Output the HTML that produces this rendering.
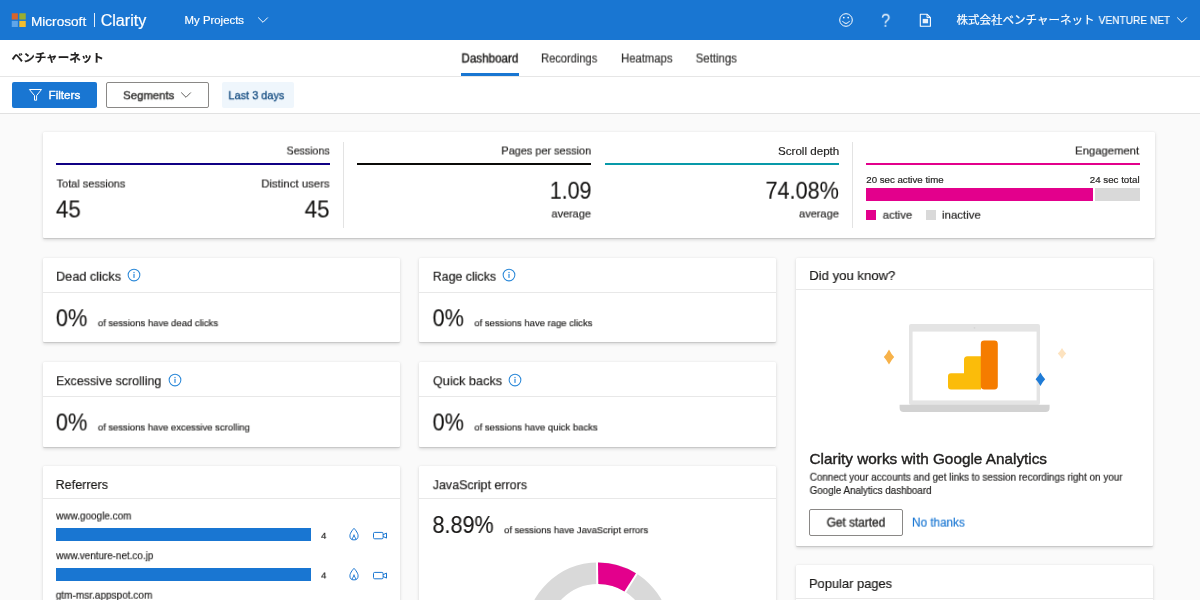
<!DOCTYPE html>
<html lang="ja">
<head>
<meta charset="utf-8">
<title>Microsoft Clarity</title>
<style>
*{box-sizing:border-box;margin:0;padding:0}
html,body{width:1200px;height:600px;overflow:hidden;background:#fafafa;font-family:"Liberation Sans","Noto Sans CJK JP",sans-serif;color:#201f1e}
.abs{position:absolute}
.t{position:absolute;white-space:nowrap;line-height:1;-webkit-text-stroke:.18px currentColor}
#hdr{position:absolute;left:0;top:0;width:1200px;height:40px;background:#1976d2;color:#fff}
#sub{position:absolute;left:0;top:40px;width:1200px;height:37px;background:#fff;border-bottom:1px solid #e6e6e6}
#flt{position:absolute;left:0;top:77px;width:1200px;height:37px;background:#fff;border-bottom:1px solid #e1e1e1}
.card{position:absolute;background:#fff;box-shadow:0 1.6px 3.6px 0 rgba(0,0,0,.132),0 .3px .9px 0 rgba(0,0,0,.108);border-radius:1px}
.chd{position:absolute;left:0;right:0;top:0;border-bottom:1px solid #e8e8e8}
.ttl{color:#1b1a19}
.big{color:#151413;-webkit-text-stroke:.1px currentColor}
.sm{color:#252423}
.lbl{color:#201f1e}
.r{text-align:right}
</style>
<style>
.t{transform-origin:0 50%;will-change:transform}
#ms{left:30.00px;top:14.00px;font-size:13.6px;transform:translate(0.93px,0.50px) scaleX(1.0017)}
#cl{left:100.00px;top:13.00px;font-size:16px;transform:translate(0.66px,0.00px) scaleX(1.0057)}
#mp{left:184.00px;top:15.00px;font-size:11.2px;transform:translate(0.58px,0.25px) scaleX(1.0169)}
#qm{left:880.00px;top:11.00px;font-size:18px;transform:translate(1.00px,0.70px) scaleX(0.9203)}
#org{left:956.00px;top:15.00px;font-size:11.5px;transform:translate(0.42px,0.07px) scaleX(1.0020)}
#org2{left:1098.00px;top:15.00px;font-size:11.5px;transform:translate(0.62px,0.00px) scaleX(0.8817)}
#pj{left:11.00px;top:13.00px;font-size:11.5px;transform:translate(0.59px,0.19px) scaleX(1.0043)}
#tb1{left:461.00px;top:12.00px;font-size:12px;transform:translate(0.41px,0.50px) scaleX(0.9708)}
#tb2{left:541.00px;top:12.00px;font-size:12px;transform:translate(0.09px,0.50px) scaleX(0.9244)}
#tb3{left:621.00px;top:12.00px;font-size:12px;transform:translate(0.08px,0.50px) scaleX(0.9392)}
#tb4{left:695.00px;top:12.00px;font-size:12px;transform:translate(0.67px,0.50px) scaleX(0.9516)}
#fl{left:48.00px;top:12.00px;font-size:11.6px;transform:translate(0.51px,0.25px) scaleX(1.0062)}
#sg{left:123.00px;top:12.00px;font-size:11.6px;transform:translate(0.15px,0.25px) scaleX(0.9787)}
#l3{left:228.00px;top:12.00px;font-size:11.6px;transform:translate(0.38px,0.25px) scaleX(0.9438)}
#s1{left:243.00px;top:13.00px;font-size:11.5px;transform:translate(0.56px,0.50px) scaleX(0.9231)}
#s2{left:13.00px;top:46.00px;font-size:11.5px;transform:translate(0.60px,0.50px) scaleX(0.9513)}
#s3{left:218.00px;top:46.00px;font-size:11.5px;transform:translate(0.36px,0.50px) scaleX(0.9877)}
#s4{left:12.00px;top:66.00px;font-size:23px;transform:translate(0.92px,0.50px) scaleX(0.9731)}
#s5{left:261.00px;top:66.00px;font-size:23px;transform:translate(0.67px,0.50px) scaleX(0.9731)}
#p1{left:458.00px;top:13.00px;font-size:11.5px;transform:translate(0.37px,0.50px) scaleX(0.9489)}
#p2{left:506.00px;top:47.00px;font-size:23px;transform:translate(0.81px,0.75px) scaleX(0.9275)}
#p3{left:508.00px;top:76.00px;font-size:11.5px;transform:translate(0.49px,0.50px) scaleX(0.9475)}
#d1{left:735.00px;top:13.00px;font-size:11.5px;transform:translate(0.01px,0.50px) scaleX(1.0089)}
#d2{left:722.00px;top:47.00px;font-size:23px;transform:translate(0.45px,0.75px) scaleX(0.9415)}
#d3{left:755.00px;top:76.00px;font-size:11.5px;transform:translate(0.99px,0.50px) scaleX(0.9596)}
#e1{left:1032.00px;top:13.00px;font-size:11.5px;transform:translate(0.10px,0.50px) scaleX(0.9820)}
#e2{left:823.00px;top:42.00px;font-size:9.6px;transform:translate(0.26px,0.50px) scaleX(1.0081)}
#e3{left:1046.00px;top:42.00px;font-size:9.6px;transform:translate(0.75px,0.50px) scaleX(1.0157)}
#e4{left:839.00px;top:77.00px;font-size:11.5px;transform:translate(0.70px,0.75px) scaleX(0.9799)}
#e5{left:899.00px;top:77.00px;font-size:11.5px;transform:translate(0.03px,0.75px) scaleX(0.9950)}
#dc1{left:12.00px;top:11.20px;font-size:13.6px;transform:translate(0.99px,0.75px) scaleX(0.9355)}
#dc2{left:12.00px;top:49.20px;font-size:23px;transform:translate(0.83px,0.25px) scaleX(0.9498)}
#dc3{left:54.00px;top:60.20px;font-size:9.7px;transform:translate(0.79px,0.25px) scaleX(0.9796)}
#rc1{left:12.61px;top:11.20px;font-size:13.6px;transform:translate(0.76px,0.75px) scaleX(0.9099)}
#rc2{left:12.61px;top:49.20px;font-size:23px;transform:translate(0.59px,0.25px) scaleX(0.9419)}
#rc3{left:54.61px;top:60.20px;font-size:9.7px;transform:translate(0.30px,0.25px) scaleX(0.9791)}
#es1{left:13.00px;top:11.81px;font-size:13.6px;transform:translate(0.00px,0.25px) scaleX(0.9172)}
#es2{left:12.00px;top:48.81px;font-size:23px;transform:translate(0.83px,0.50px) scaleX(0.9498)}
#es3{left:54.00px;top:59.81px;font-size:9.7px;transform:translate(0.82px,0.50px) scaleX(0.9769)}
#qb1{left:12.61px;top:11.81px;font-size:13.6px;transform:translate(0.86px,0.25px) scaleX(0.9348)}
#qb2{left:12.61px;top:48.81px;font-size:23px;transform:translate(0.59px,0.50px) scaleX(0.9419)}
#qb3{left:54.61px;top:59.81px;font-size:9.7px;transform:translate(0.29px,0.50px) scaleX(0.9838)}
#dk1{left:13.20px;top:11.31px;font-size:13.6px;transform:translate(0.21px,0.00px) scaleX(0.9666)}
#dk2{left:13.20px;top:194.31px;font-size:14.6px;transform:translate(0.55px,0.30px) scaleX(1.0495)}
#dk3{left:13.20px;top:214.31px;font-size:10px;transform:translate(0.72px,0.70px) scaleX(0.9870)}
#dk4{left:13.20px;top:228.31px;font-size:10px;transform:translate(0.68px,0.00px) scaleX(0.9785)}
#dk5{left:30.20px;top:258.31px;font-size:12px;transform:translate(0.68px,0.60px) scaleX(0.9853)}
#dk6{left:116.20px;top:258.31px;font-size:12px;transform:translate(0.00px,0.60px) scaleX(0.9771)}
#rf1{left:12.00px;top:11.61px;font-size:13.6px;transform:translate(0.54px,0.00px) scaleX(0.9276)}
#rf2{left:13.00px;top:43.61px;font-size:10.5px;transform:translate(0.11px,0.50px) scaleX(0.9502)}
#rf3{left:277.00px;top:63.61px;font-size:9.7px;transform:translate(0.96px,0.80px) scaleX(0.9916)}
#rf4{left:13.00px;top:83.61px;font-size:10.5px;transform:translate(0.20px,0.20px) scaleX(0.9401)}
#rf5{left:277.00px;top:103.61px;font-size:9.7px;transform:translate(0.96px,0.50px) scaleX(0.9916)}
#rf6{left:12.00px;top:122.61px;font-size:10.5px;transform:translate(0.76px,0.70px) scaleX(0.9571)}
#js1{left:12.61px;top:11.61px;font-size:13.6px;transform:translate(0.75px,0.25px) scaleX(0.9174)}
#js2{left:12.61px;top:47.61px;font-size:23px;transform:translate(0.50px,0.00px) scaleX(0.9372)}
#js3{left:84.61px;top:58.61px;font-size:9.7px;transform:translate(0.05px,0.25px) scaleX(0.9732)}
#pp1{left:12.20px;top:11.70px;font-size:13.6px;transform:translate(0.92px,0.00px) scaleX(0.9489)}
</style>
</head>
<body>
<!-- header -->
<div id="hdr">
  <svg class="abs" style="left:10px;top:11px" width="18" height="18" viewBox="10 11 18 18"><rect x="11.75" y="13.25" width="6.1" height="6.3" fill="#d8642a"/><rect x="19.3" y="13.25" width="6.45" height="6.3" fill="#9aad30"/><rect x="11.75" y="20.9" width="6.1" height="6.1" fill="#5ea5ea"/><rect x="19.3" y="20.9" width="6.45" height="6.1" fill="#f2bd2e"/></svg>
  <div class="t" id="ms">Microsoft</div>
  <div class="abs" style="left:94px;top:12.5px;width:1px;height:14px;background:#e3eefa"></div>
  <div class="t" id="cl">Clarity</div>
  <div class="t" id="mp">My Projects</div>
  <svg class="abs" style="left:257px;top:15px" width="12" height="10" viewBox="0 0 12 10"><path d="M1.2 2.5 L6 7.3 L10.8 2.5" fill="none" stroke="#fff" stroke-width="1"/></svg>
  <!-- right icons -->
  <svg class="abs" style="left:838px;top:12px" width="16" height="16" viewBox="0 0 16 16"><circle cx="8" cy="8" r="6.3" fill="none" stroke="#fff" stroke-width="1"/><circle cx="5.8" cy="5.6" r=".85" fill="#fff"/><circle cx="10.2" cy="5.6" r=".85" fill="#fff"/><path d="M4.3 8.9 Q8 14 11.7 8.9" fill="none" stroke="#fff" stroke-width="1"/></svg>
  <div class="t" id="qm" style="-webkit-text-stroke:0;color:rgba(255,255,255,.92)">?</div>
  <svg class="abs" style="left:918px;top:12px" width="14" height="16" viewBox="0 0 14 16"><path d="M2.3 2.2 H9 L12.4 5.6 V14.2 H2.3 Z" fill="none" stroke="#fff" stroke-width="1.1" stroke-linejoin="round"/><path d="M9 2.2 V5.6 H12.4" fill="none" stroke="#fff" stroke-width="1"/><rect x="4.7" y="6.9" width="5.4" height="4.4" fill="#fff" opacity=".9"/></svg>
  <div class="t" id="org">株式会社ベンチャーネット</div> <div class="t" id="org2">VENTURE NET</div>
  <svg class="abs" style="left:1176px;top:15px" width="12" height="10" viewBox="0 0 12 10"><path d="M1.2 2.5 L6 7.3 L10.8 2.5" fill="none" stroke="#fff" stroke-width="1"/></svg>
</div>
<!-- sub nav -->
<div id="sub">
  <div class="t" id="pj" style="font-weight:bold;color:#201f1e">ベンチャーネット</div>
  <div class="t" id="tb1" style="-webkit-text-stroke:.4px #201f1e;color:#201f1e">Dashboard</div>
  <div class="abs" style="left:461px;top:32.6px;width:58px;height:3.2px;background:#1976d2"></div>
  <div class="t" id="tb2" style="color:#323130">Recordings</div>
  <div class="t" id="tb3" style="color:#323130">Heatmaps</div>
  <div class="t" id="tb4" style="color:#323130">Settings</div>
</div>
<!-- filter bar -->
<div id="flt">
  <div class="abs" style="left:12px;top:5px;width:85px;height:26px;background:#1976d2;border-radius:2px"></div>
  <svg class="abs" style="left:28px;top:11px" width="15" height="14" viewBox="0 0 15 14"><path d="M1.4 1.5 H13.5 L8.6 7.6 V12.2 H6.5 V7.6 Z" fill="none" stroke="#fff" stroke-width="1" stroke-linejoin="round"/></svg>
  <div class="t" id="fl" style="-webkit-text-stroke:.4px #fff;color:#fff">Filters</div>
  <div class="abs" style="left:106px;top:5px;width:103px;height:26px;background:#fff;border:1px solid #8a8886;border-radius:2px"></div>
  <div class="t" id="sg" style="-webkit-text-stroke:.4px #323130;color:#323130">Segments</div>
  <svg class="abs" style="left:180px;top:13px" width="12" height="10" viewBox="0 0 12 10"><path d="M1.2 2.5 L6 7.3 L10.8 2.5" fill="none" stroke="#605e5c" stroke-width="1"/></svg>
  <div class="abs" style="left:222px;top:5px;width:72px;height:26px;background:#eff6fc;border-radius:2px"></div>
  <div class="t" id="l3" style="color:#10497f;-webkit-text-stroke:.3px #10497f">Last 3 days</div>
</div>

<!-- summary card -->
<div class="card" style="left:43px;top:132px;width:1111.6px;height:105.7px">
  <div class="t lbl r" id="s1">Sessions</div>
  <div class="abs" style="left:13.25px;top:31.25px;width:273.25px;height:2px;background:#100084"></div>
  <div class="t lbl" id="s2">Total sessions</div>
  <div class="t lbl r" id="s3">Distinct users</div>
  <div class="t big" id="s4">45</div>
  <div class="t big r" id="s5">45</div>
  <div class="abs" style="left:299.5px;top:10px;width:1px;height:85.5px;background:#e3e3e3"></div>

  <div class="t lbl r" id="p1">Pages per session</div>
  <div class="abs" style="left:314px;top:31.25px;width:233.75px;height:2px;background:#0b0a08"></div>
  <div class="t big r" id="p2">1.09</div>
  <div class="t lbl r" id="p3">average</div>

  <div class="t lbl r" id="d1">Scroll depth</div>
  <div class="abs" style="left:561.5px;top:31.25px;width:234.5px;height:2px;background:#0899a9"></div>
  <div class="t big r" id="d2">74.08%</div>
  <div class="t lbl r" id="d3">average</div>
  <div class="abs" style="left:809px;top:10px;width:1px;height:85.5px;background:#e3e3e3"></div>

  <div class="t lbl r" id="e1">Engagement</div>
  <div class="abs" style="left:823.25px;top:31.25px;width:273.25px;height:2px;background:#e3008c"></div>
  <div class="t sm" id="e2">20 sec active time</div>
  <div class="t sm r" id="e3">24 sec total</div>
  <div class="abs" style="left:823.25px;top:56.25px;width:227px;height:12.75px;background:#e3008c"></div>
  <div class="abs" style="left:1052.25px;top:56.25px;width:44.25px;height:12.75px;background:#d9d9d9"></div>
  <div class="abs" style="left:823.25px;top:78px;width:10px;height:9.6px;background:#e3008c"></div>
  <div class="t lbl" id="e4">active</div>
  <div class="abs" style="left:882.75px;top:78px;width:9.75px;height:9.6px;background:#d9d9d9"></div>
  <div class="t lbl" id="e5">inactive</div>
</div>

<!-- Dead clicks -->
<div class="card" style="left:43px;top:257.8px;width:357.2px;height:84.6px">
  <div class="chd" style="height:34.9px"></div>
  <div class="t ttl" id="dc1">Dead clicks</div>
  <svg class="abs info" style="left:84.1px;top:10.6px" width="14" height="14" viewBox="0 0 14 14"><circle cx="7" cy="7" r="5.85" fill="none" stroke="#2b88d8" stroke-width="1.05"/><rect x="6.3" y="6" width="1.4" height="3.9" fill="#4a9be2"/><rect x="6.3" y="3.9" width="1.4" height="1.3" fill="#4a9be2"/></svg>
  <div class="t big" id="dc2">0%</div>
  <div class="t sm" id="dc3">of sessions have dead clicks</div>
</div>
<!-- Rage clicks -->
<div class="card" style="left:419.4px;top:257.8px;width:357px;height:84.6px">
  <div class="chd" style="height:34.9px"></div>
  <div class="t ttl" id="rc1">Rage clicks</div>
  <svg class="abs info" style="left:83.1px;top:10.6px" width="14" height="14" viewBox="0 0 14 14"><circle cx="7" cy="7" r="5.85" fill="none" stroke="#2b88d8" stroke-width="1.05"/><rect x="6.3" y="6" width="1.4" height="3.9" fill="#4a9be2"/><rect x="6.3" y="3.9" width="1.4" height="1.3" fill="#4a9be2"/></svg>
  <div class="t big" id="rc2">0%</div>
  <div class="t sm" id="rc3">of sessions have rage clicks</div>
</div>
<!-- Excessive scrolling -->
<div class="card" style="left:43px;top:362.2px;width:357.2px;height:84.6px">
  <div class="chd" style="height:34.6px"></div>
  <div class="t ttl" id="es1">Excessive scrolling</div>
  <svg class="abs info" style="left:124.5px;top:10.7px" width="14" height="14" viewBox="0 0 14 14"><circle cx="7" cy="7" r="5.85" fill="none" stroke="#2b88d8" stroke-width="1.05"/><rect x="6.3" y="6" width="1.4" height="3.9" fill="#4a9be2"/><rect x="6.3" y="3.9" width="1.4" height="1.3" fill="#4a9be2"/></svg>
  <div class="t big" id="es2">0%</div>
  <div class="t sm" id="es3">of sessions have excessive scrolling</div>
</div>
<!-- Quick backs -->
<div class="card" style="left:419.4px;top:362.2px;width:357px;height:84.6px">
  <div class="chd" style="height:34.6px"></div>
  <div class="t ttl" id="qb1">Quick backs</div>
  <svg class="abs info" style="left:88.9px;top:10.7px" width="14" height="14" viewBox="0 0 14 14"><circle cx="7" cy="7" r="5.85" fill="none" stroke="#2b88d8" stroke-width="1.05"/><rect x="6.3" y="6" width="1.4" height="3.9" fill="#4a9be2"/><rect x="6.3" y="3.9" width="1.4" height="1.3" fill="#4a9be2"/></svg>
  <div class="t big" id="qb2">0%</div>
  <div class="t sm" id="qb3">of sessions have quick backs</div>
</div>

<!-- Did you know -->
<div class="card" style="left:795.8px;top:257.7px;width:357.4px;height:288px">
  <div class="chd" style="height:32.8px"></div>
  <div class="t ttl" id="dk1">Did you know?</div>
  <svg class="abs" style="left:74px;top:52px" width="210" height="110" viewBox="870 310 210 110">
    <rect x="909" y="324" width="131" height="81" rx="2" fill="#e4e4e4"/>
    <rect x="912.6" y="331.6" width="124" height="68.8" fill="#fff"/>
    <path d="M899.6 404.7 H1049.6 V408 Q1049.6 412 1045.6 412 H903.6 Q899.6 412 899.6 408 Z" fill="#d2d2d2"/>
    <path d="M964 359.8 Q964 356.3 967.5 356.3 H981 V389.5 H951 Q948 389.5 948 386.5 V376.2 Q948 373.2 951 373.2 H964 Z" fill="#fbbc0a"/>
    <rect x="980.8" y="340.5" width="17" height="49" rx="3.4" fill="#f57c00"/>
    <path d="M889 349.4 Q891.18 353.81 894.2 357 Q891.18 360.19 889 364.6 Q886.82 360.19 883.8 357 Q886.82 353.81 889 349.4Z" fill="#f7b24a"/>
    <path d="M1062 347.9 Q1063.76 351.15 1066.2 353.5 Q1063.76 355.85 1062 359.1 Q1060.24 355.85 1057.8 353.5 Q1060.24 351.15 1062 347.9Z" fill="#fde3c0"/>
    <path d="M1040.4 372.6 Q1042.42 376.49 1045.2 379.3 Q1042.42 382.11 1040.4 386.0 Q1038.38 382.11 1035.6000000000001 379.3 Q1038.38 376.49 1040.4 372.6Z" fill="#1f7bd6"/>
    <circle cx="974.5" cy="327.8" r=".9" fill="#d6d6d6"/>
  </svg>
  <div class="t" id="dk2" style="-webkit-text-stroke:.4px #201f1e;color:#201f1e">Clarity works with Google Analytics</div>
  <div class="t sm" id="dk3">Connect your accounts and get links to session recordings right on your</div>
  <div class="t sm" id="dk4">Google Analytics dashboard</div>
  <div class="abs" style="left:13px;top:251px;width:94px;height:27px;border:1px solid #8a8886;border-radius:2px;background:#fff"></div>
  <div class="t" id="dk5" style="-webkit-text-stroke:.4px #323130;color:#323130">Get started</div>
  <div class="t" id="dk6" style="color:#1976d2">No thanks</div>
</div>

<!-- Referrers -->
<div class="card" style="left:43px;top:466.4px;width:357.2px;height:160px">
  <div class="chd" style="height:32.7px"></div>
  <div class="t ttl" id="rf1">Referrers</div>
  <div class="t" id="rf2" style="color:#201f1e">www.google.com</div>
  <div class="abs" style="left:13px;top:62.1px;width:255.2px;height:13px;background:#1976d2"></div>
  <div class="t sm" id="rf3">4</div>
  <svg class="abs" style="left:304.5px;top:61.1px" width="12" height="15" viewBox="0 0 12 15"><path d="M6 1.3 C6 1.3 10.1 5.6 10.1 8.8 A4.1 4.1 0 0 1 1.9 8.8 C1.9 5.6 6 1.3 6 1.3Z" fill="none" stroke="#1976d2" stroke-width="1" stroke-linejoin="round"/><path d="M4.3 12.5 C4.3 10.4 6 9.6 6 7.7 C6 9.6 7.7 10.4 7.7 12.5" fill="none" stroke="#1976d2" stroke-width=".9" stroke-linejoin="round"/></svg>
  <svg class="abs" style="left:329px;top:63.4px" width="16" height="11" viewBox="0 0 16 11"><rect x="1.5" y="2.4" width="9.6" height="6.4" rx="1.2" fill="none" stroke="#1976d2" stroke-width="1"/><path d="M11.1 4.7 L14.5 3.1 V8.1 L11.1 6.5" fill="none" stroke="#1976d2" stroke-width="1" stroke-linejoin="round"/></svg>
  <div class="t" id="rf4" style="color:#201f1e">www.venture-net.co.jp</div>
  <div class="abs" style="left:13px;top:101.7px;width:255.2px;height:13px;background:#1976d2"></div>
  <div class="t sm" id="rf5">4</div>
  <svg class="abs" style="left:304.5px;top:100.9px" width="12" height="15" viewBox="0 0 12 15"><path d="M6 1.3 C6 1.3 10.1 5.6 10.1 8.8 A4.1 4.1 0 0 1 1.9 8.8 C1.9 5.6 6 1.3 6 1.3Z" fill="none" stroke="#1976d2" stroke-width="1" stroke-linejoin="round"/><path d="M4.3 12.5 C4.3 10.4 6 9.6 6 7.7 C6 9.6 7.7 10.4 7.7 12.5" fill="none" stroke="#1976d2" stroke-width=".9" stroke-linejoin="round"/></svg>
  <svg class="abs" style="left:329px;top:103.2px" width="16" height="11" viewBox="0 0 16 11"><rect x="1.5" y="2.4" width="9.6" height="6.4" rx="1.2" fill="none" stroke="#1976d2" stroke-width="1"/><path d="M11.1 4.7 L14.5 3.1 V8.1 L11.1 6.5" fill="none" stroke="#1976d2" stroke-width="1" stroke-linejoin="round"/></svg>
  <div class="t" id="rf6" style="color:#201f1e">gtm-msr.appspot.com</div>
</div>

<!-- JavaScript errors -->
<div class="card" style="left:419.4px;top:466.4px;width:357px;height:160px">
  <div class="chd" style="height:32.8px"></div>
  <div class="t ttl" id="js1">JavaScript errors</div>
  <div class="t big" id="js2">8.89%</div>
  <div class="t sm" id="js3">of sessions have JavaScript errors</div>
  <svg class="abs" style="left:98.6px;top:89.6px" width="160" height="70" viewBox="518 556 160 70">
    <circle cx="598" cy="635.1" r="61.80" fill="none" stroke="#d9d9d9" stroke-width="21.40"/>
    <path d="M596.99 562.61 A72.5 72.5 0 0 1 636.74 573.82 L625.31 591.91 A51.1 51.1 0 0 0 597.29 584.00 Z" fill="#e3008c"/>
    <path d="M598 635.1 L596.93 558.61" stroke="#fff" stroke-width="2"/>
    <path d="M598 635.1 L638.88 570.44" stroke="#fff" stroke-width="2"/>
  </svg>
</div>

<!-- Popular pages -->
<div class="card" style="left:795.8px;top:565.3px;width:357.4px;height:60px">
  <div class="chd" style="height:33.5px"></div>
  <div class="t ttl" id="pp1">Popular pages</div>
</div>
</body>
</html>
